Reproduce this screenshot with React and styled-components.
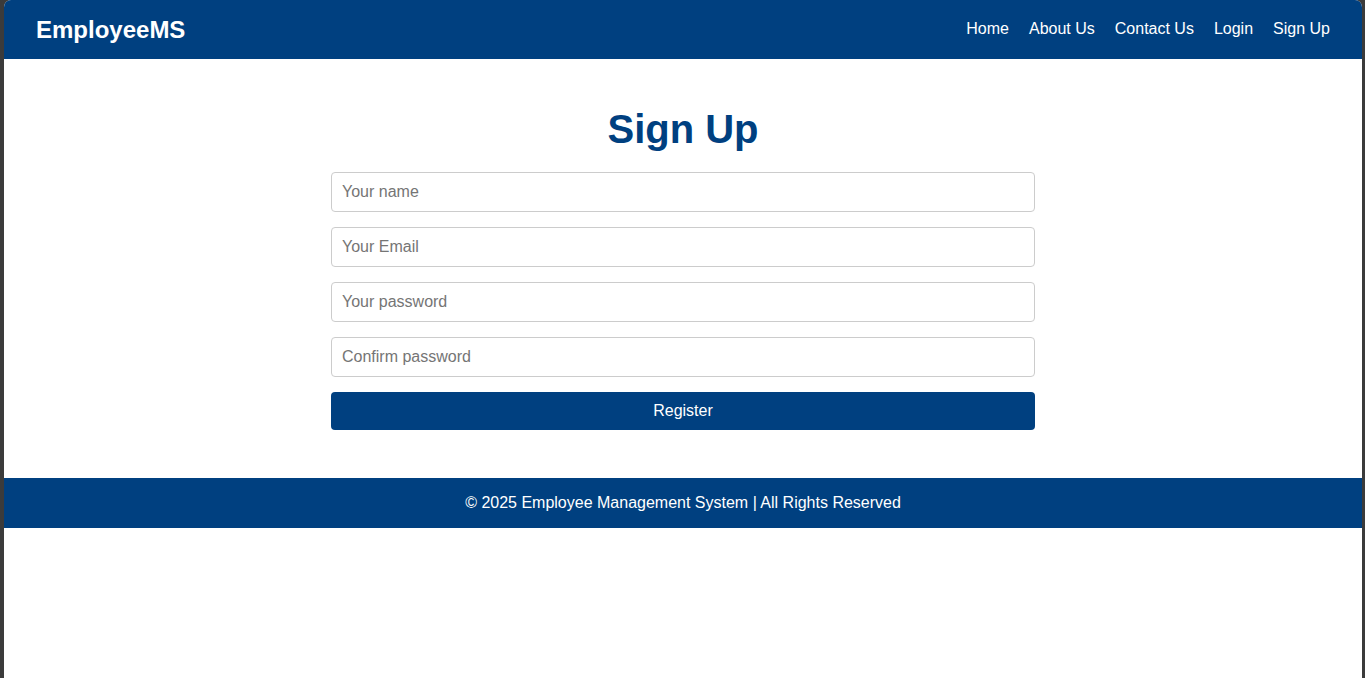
import React from "react";
import styled, { createGlobalStyle } from "styled-components";

const GlobalStyle = createGlobalStyle`
  html, body { margin: 0; padding: 0; }
  body {
    background: #3b3b3b;
    font-family: "Liberation Sans", Arial, sans-serif;
  }
  * { box-sizing: border-box; }
`;

const Frame = styled.div`
  min-height: 678px;
  padding: 0 3px 0 4px;
  background: #3b3b3b;
`;

const Window = styled.div`
  min-height: 678px;
  background: #ffffff;
  border-radius: 7px 7px 0 0;
  overflow: hidden;
`;

const NavBar = styled.header`
  height: 59px;
  background: #004080;
  display: flex;
  align-items: center;
  justify-content: space-between;
  padding: 0 32px;
  color: #ffffff;
`;

const Logo = styled.div`
  font-size: 24px;
  font-weight: bold;
  margin-top: 1px;
`;

const NavLinks = styled.nav`
  display: flex;
  gap: 20px;
  margin-bottom: 2px;
`;

const NavLink = styled.a`
  color: #ffffff;
  text-decoration: none;
  font-size: 16px;
  cursor: pointer;
`;

const Main = styled.main`
  padding: 47px 20px 48px;
  display: flex;
  flex-direction: column;
  align-items: center;
`;

const Title = styled.h1`
  margin: 0 0 20px;
  font-size: 40px;
  line-height: 46px;
  font-weight: bold;
  color: #004080;
`;

const Form = styled.form`
  width: 704px;
  display: flex;
  flex-direction: column;
  gap: 15px;
`;

const Input = styled.input`
  height: 40px;
  width: 100%;
  padding: 0 10px;
  border: 1px solid #cccccc;
  border-radius: 4px;
  font-family: "Liberation Sans", Arial, sans-serif;
  font-size: 16px;
  color: #333;
  outline: none;
  &::placeholder { color: #757575; }
`;

const Button = styled.button`
  height: 38px;
  width: 100%;
  border: none;
  border-radius: 4px;
  background: #004080;
  color: #ffffff;
  font-family: "Liberation Sans", Arial, sans-serif;
  font-size: 16px;
  cursor: pointer;
`;

const Footer = styled.footer`
  height: 50px;
  background: #004080;
  color: #ffffff;
  display: flex;
  align-items: center;
  justify-content: center;
  font-size: 16px;
`;

export default function App() {
  const links = ["Home", "About Us", "Contact Us", "Login", "Sign Up"];
  return (
    <>
      <GlobalStyle />
      <Frame>
        <Window>
          <NavBar>
            <Logo>EmployeeMS</Logo>
            <NavLinks>
              {links.map((l) => (
                <NavLink key={l}>{l}</NavLink>
              ))}
            </NavLinks>
          </NavBar>
          <Main>
            <Title>Sign Up</Title>
            <Form onSubmit={(e) => e.preventDefault()}>
              <Input type="text" placeholder="Your name" />
              <Input type="email" placeholder="Your Email" />
              <Input type="password" placeholder="Your password" />
              <Input type="password" placeholder="Confirm password" />
              <Button type="submit">Register</Button>
            </Form>
          </Main>
          <Footer>© 2025 Employee Management System | All Rights Reserved</Footer>
        </Window>
      </Frame>
    </>
  );
}
